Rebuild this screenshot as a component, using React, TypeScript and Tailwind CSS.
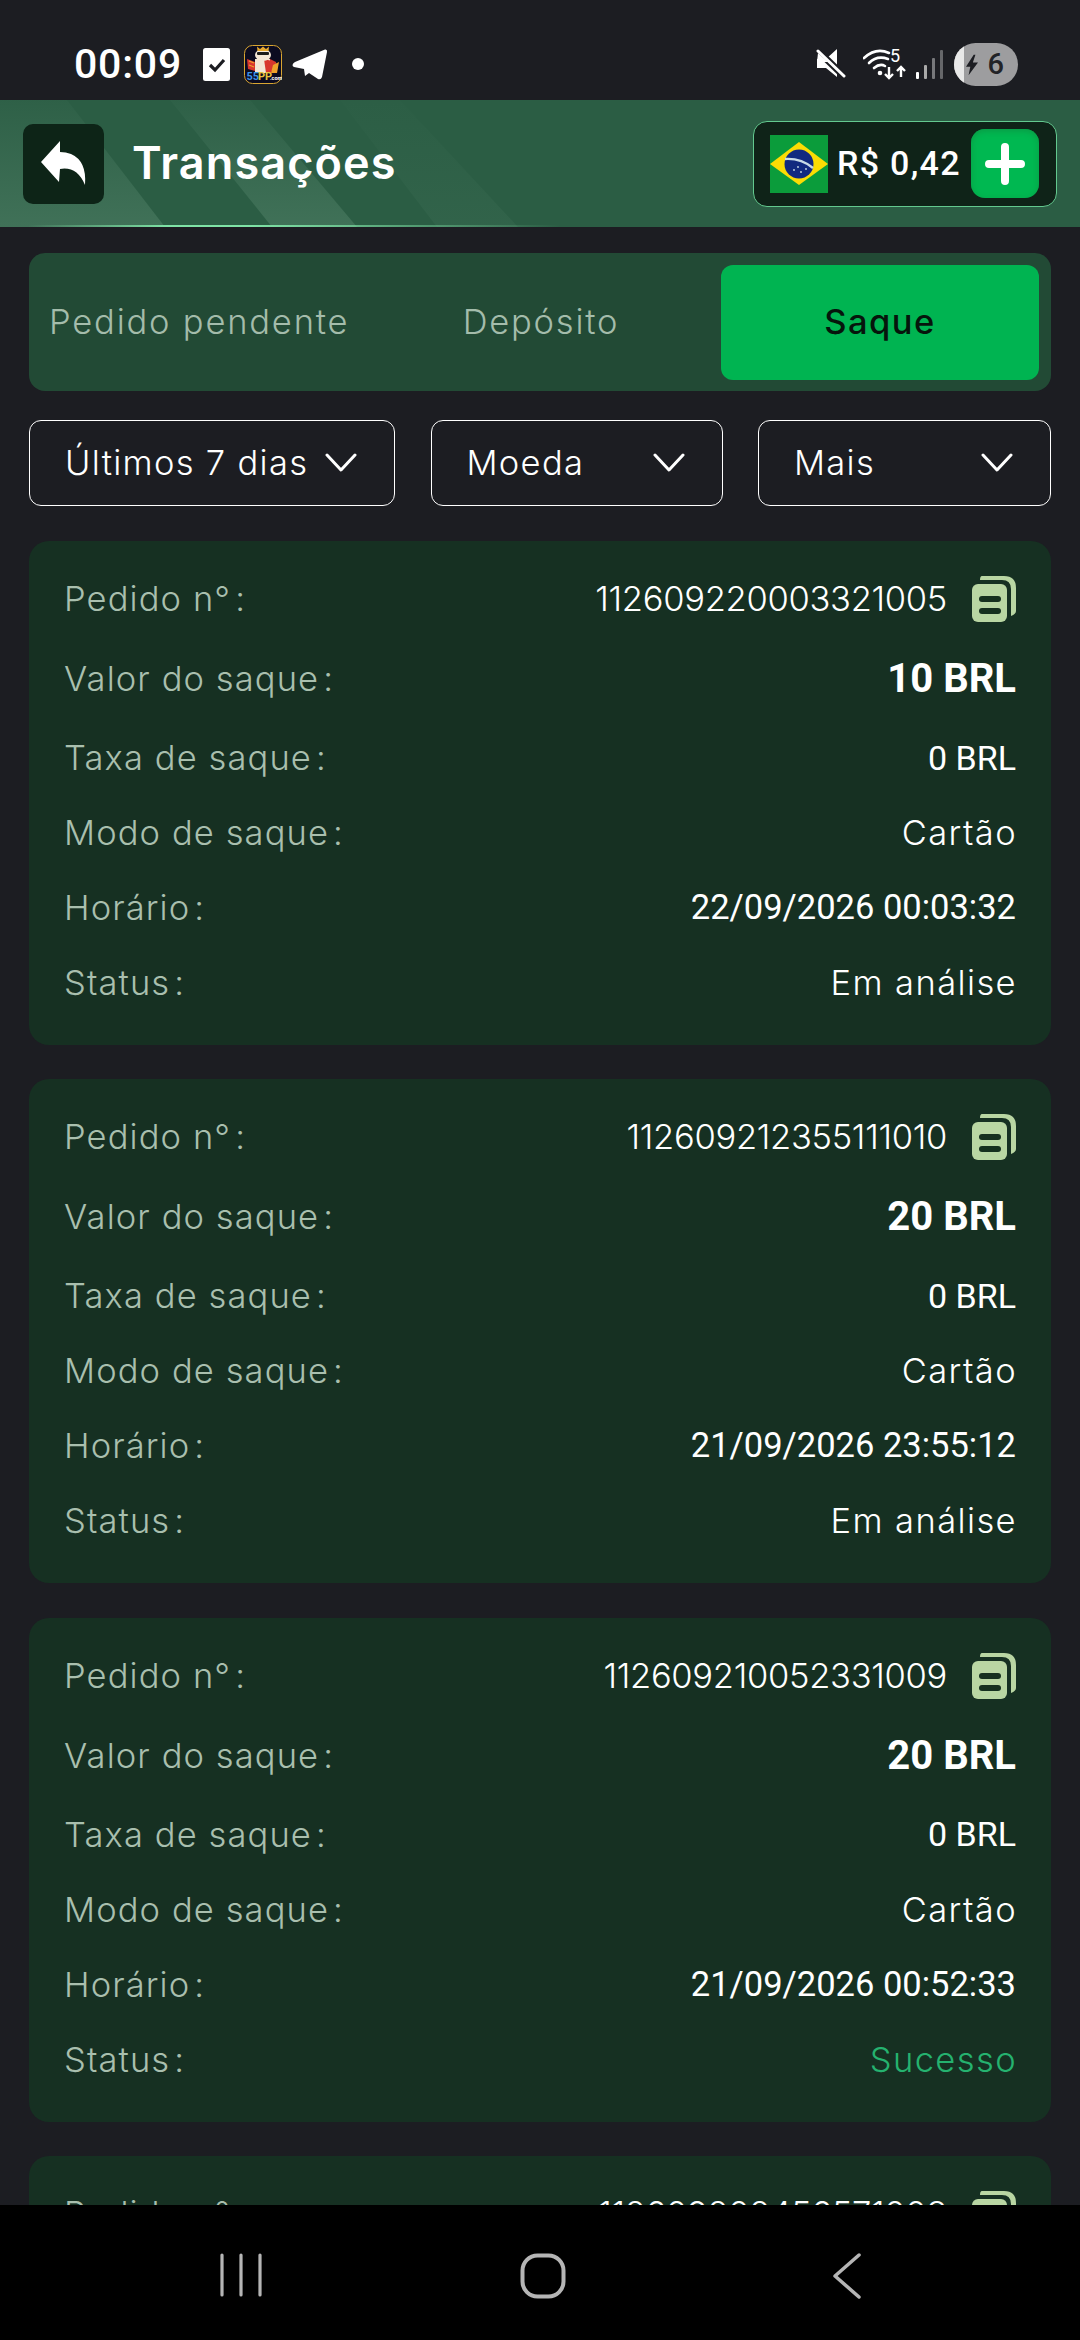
import React from "react";

const SANS = "font-['Inter','Liberation_Sans',sans-serif]";
const ROBOTO = "font-['Roboto','Liberation_Sans',sans-serif]";

type Order = { id: string; value: string; date: string; status: string; ok?: boolean };

const orders: Order[] = [
  { id: "112609220003321005", value: "10 BRL", date: "22/09/2026 00:03:32", status: "Em análise" },
  { id: "112609212355111010", value: "20 BRL", date: "21/09/2026 23:55:12", status: "Em análise" },
  { id: "112609210052331009", value: "20 BRL", date: "21/09/2026 00:52:33", status: "Sucesso", ok: true },
  { id: "112609202456571008", value: "20 BRL", date: "20/09/2026 00:24:56", status: "Sucesso", ok: true },
];

function Chevron() {
  return (
    <svg width="32" height="22" viewBox="0 0 32 22" fill="none" className="shrink-0">
      <path d="M2 3 L16 18 L30 3" stroke="white" strokeWidth="3" strokeLinecap="round" strokeLinejoin="round" />
    </svg>
  );
}

function CopyIcon() {
  return (
    <svg width="44" height="46" viewBox="0 0 44 46" className="shrink-0">
      <path d="M10 0 H32 Q44 0 44 12 V35 Q44 38 39 40 V13 Q39 4 30 4 H8 Q8 0 10 0 Z" fill="#b9d6a3" />
      <rect x="0" y="8" width="35" height="38" rx="6" fill="#b9d6a3" />
      <rect x="7" y="20" width="22" height="6" rx="3" fill="#16301f" />
      <rect x="7" y="32" width="22" height="6" rx="3" fill="#16301f" />
    </svg>
  );
}

function Label({ text }: { text: string }) {
  return (
    <span className={`${SANS} text-[34.5px] font-light tracking-[1.1px] text-[#a9bfae]`}>
      {text}
      <span className="ml-[4px]">:</span>
    </span>
  );
}

function Row({ label, h, children }: { label: string; h: string; children: React.ReactNode }) {
  return (
    <div className={`flex items-center justify-between ${h}`}>
      <Label text={label} />
      {children}
    </div>
  );
}

function Card({ o }: { o: Order }) {
  const text = `${SANS} text-[34.5px] font-light tracking-[1.4px] text-white`;
  return (
    <div className="h-[504px] shrink-0 rounded-[20px] bg-[#163022] px-[35px] pt-[20px]">
      <Row label="Pedido n°" h="h-[76px]">
        <div className="flex items-center gap-[25px]">
          <span className={`${SANS} text-[34.5px] font-light tracking-[-0.3px] text-white`}>{o.id}</span>
          <CopyIcon />
        </div>
      </Row>
      <Row label="Valor do saque" h="h-[84px]">
        <span className={`${ROBOTO} text-[40px] font-bold text-white`}>{o.value}</span>
      </Row>
      <Row label="Taxa de saque" h="h-[74px]">
        <span className={`${ROBOTO} text-[34px] text-white`}>0 BRL</span>
      </Row>
      <Row label="Modo de saque" h="h-[76px]">
        <span className={`${text} -mr-[1px]`}>Cartão</span>
      </Row>
      <Row label="Horário" h="h-[74px]">
        <span className={`${ROBOTO} text-[34.5px] text-white`}>{o.date}</span>
      </Row>
      <Row label="Status" h="h-[76px]">
        <span className={`-mr-[1px] ${o.ok ? `${SANS} text-[34.5px] font-light tracking-[1.4px] text-[#25b26f]` : text}`}>{o.status}</span>
      </Row>
    </div>
  );
}

function Filter({ label, w }: { label: string; w: string }) {
  return (
    <div className={`flex h-[86px] items-center justify-between rounded-[12px] border border-white pl-[35px] pr-[37px] ${w}`}>
      <span className={`${SANS} text-[34.5px] font-light tracking-[1.3px] text-white`}>{label}</span>
      <Chevron />
    </div>
  );
}

function AppIcon() {
  return (
    <svg width="38" height="39" viewBox="0 0 38 39" className="shrink-0">
      <rect x="0.5" y="0.5" width="37" height="38" rx="8" fill="#0b0b20" stroke="#d9a531" />
      <path d="M24 13 L32 17 L33 26 L25 27 Z" fill="#d8362e" />
      <path d="M11 14 H26 V28 H11 Z" fill="#f3e6d6" />
      <path d="M20 14 L28 16 L27 28 H22 Z" fill="#d8362e" />
      <ellipse cx="19" cy="10" rx="8" ry="6" fill="#f3e6d6" />
      <rect x="13" y="7" width="12" height="3" rx="1" fill="#1a1a1a" />
      <path d="M13 1.5 L16 4 L19 1.5 L22 4 L25 1.5 L24.5 6 H13.5 Z" fill="#e8a92e" />
      <path d="M3 14 L11 17 L11 26 L4 24 Z" fill="#d8362e" />
      <path d="M5 16 L10 18 M5 20 L10 22" stroke="#efa12b" strokeWidth="1.2" />
      <path d="M29 20 L35 17 L33 28 L27 28 Z" fill="#efa12b" />
      <text x="2.5" y="35" fontSize="11" fontWeight="700" fill="#3b93e8" className={ROBOTO}>55</text>
      <text x="14" y="35" fontSize="11" fontWeight="700" fill="#e8c23c" className={ROBOTO}>PP</text>
      <text x="26" y="35" fontSize="5.5" fontWeight="700" fill="#ffffff" className={ROBOTO}>.com</text>
    </svg>
  );
}

function StatusBar() {
  return (
    <div className="flex h-[100px] shrink-0 items-center justify-between bg-[#1c1d22] pl-[74px] pr-[62px] pt-[28px]">
      <div className="flex items-center">
        <span className={`${ROBOTO} w-[107px] text-[41px] font-medium leading-none tracking-[0.8px] text-white`}>00:09</span>
        <svg width="27" height="33" viewBox="0 0 27 33" className="ml-[22px]">
          <rect width="27" height="33" rx="2.5" fill="white" />
          <path d="M7 17 L12 22 L21 12" stroke="#1c1d22" strokeWidth="3.2" fill="none" />
        </svg>
        <div className="ml-[14px]"><AppIcon /></div>
        <svg width="36" height="31" viewBox="0 0 36 31" className="ml-[10px]">
          <path d="M0.5 16 Q1 14 3 13 L33 0.5 Q35.5 0 35 3 L30 28 Q29 31 26 30 L17 24 L13 27 L12 20 L2 18 Q0.5 17.5 0.5 16 Z" fill="white" />
        </svg>
        <div className="ml-[24px] h-[12px] w-[12px] rounded-full bg-white" />
      </div>
      <div className="flex items-center">
        <svg width="30" height="30" viewBox="0 0 30 30">
          <path d="M1 10 H10 L21 0 V28 L10 19 H1 Z" fill="white" />
          <path d="M0 0 L30 29" stroke="#1c1d22" strokeWidth="7" />
          <path d="M2 2 L28 27" stroke="white" strokeWidth="3" strokeLinecap="round" />
          <path d="M2 4 L12 13 L1 13 Z" fill="white" />
        </svg>
        <svg width="44" height="32" viewBox="0 0 44 32" fill="none" stroke="white" className="ml-[17px]">
          <path d="M1 10 Q13 -1 26 5" strokeWidth="2.6" strokeLinecap="round" />
          <path d="M6 15 Q14 7 25 11" strokeWidth="2.6" strokeLinecap="round" />
          <path d="M11 20 Q17 15 22 18" strokeWidth="2.6" strokeLinecap="round" />
          <circle cx="17" cy="25" r="2.3" fill="white" stroke="none" />
          <path d="M26 19 V30 M22 26 L26 30 L30 26" strokeWidth="2.4" />
          <path d="M38 29 V19 M34 23 L38 19 L42 23" strokeWidth="2.4" />
          <text x="27" y="14" fill="white" stroke="none" fontSize="18" className={ROBOTO}>5</text>
        </svg>
        <div className="ml-[9px] flex h-[29px] items-end gap-[4.5px]">
          <div className="h-[7px] w-[3.5px] rounded-[1px] bg-white" />
          <div className="h-[14px] w-[3.5px] rounded-[1px] bg-[#a9a9a9]" />
          <div className="h-[21px] w-[3.5px] rounded-[1px] bg-[#77787b]" />
          <div className="h-[29px] w-[3.5px] rounded-[1px] bg-[#66676a]" />
        </div>
        <div className="relative ml-[11px] flex h-[43px] w-[64px] items-center justify-end overflow-hidden rounded-full bg-[#9d9d9f] pr-[14px]">
          <div className="absolute left-0 top-0 h-full w-[10px] bg-[#e8e8e8]" />
          <svg width="12" height="22" viewBox="0 0 14 24" fill="#1c1d22" className="absolute left-[12px] top-[11px]">
            <path d="M9 0 L0 14 H5 L3 24 L14 9 H8 L11 0 Z" />
          </svg>
          <span className={`${ROBOTO} text-[29px] font-medium leading-none text-[#222327]`}>6</span>
        </div>
      </div>
    </div>
  );
}

function Flag() {
  return (
    <svg width="58" height="58" viewBox="0 0 58 58" className="shrink-0">
      <rect width="58" height="58" fill="#0b9c3b" />
      <path d="M29 7 L58 29 L29 50 L0 29 Z" fill="#fbdc04" />
      <circle cx="29" cy="29" r="14.5" fill="#112a80" />
      <path d="M15 24 Q31 23 43 33" stroke="#c8dbe6" strokeWidth="2.4" fill="none" />
      <circle cx="24" cy="35" r="0.9" fill="#c8dbe6" />
      <circle cx="31" cy="37" r="0.9" fill="#c8dbe6" />
      <circle cx="36" cy="34" r="0.9" fill="#c8dbe6" />
      <circle cx="28" cy="32" r="0.9" fill="#c8dbe6" />
    </svg>
  );
}

function Header() {
  return (
    <div className="relative flex h-[127px] shrink-0 items-center justify-between overflow-hidden bg-[#2b5d44] pl-[23px] pr-[23px]">
      <svg className="absolute left-0 top-0" width="620" height="127" viewBox="0 0 620 127">
        <defs>
          <linearGradient id="band" x1="0" y1="0" x2="0" y2="1">
            <stop offset="0" stopColor="#6d9c82" stopOpacity="0.05" />
            <stop offset="1" stopColor="#6d9c82" stopOpacity="0.32" />
          </linearGradient>
        </defs>
        <polygon points="0,0 67,0 165,127 0,127" fill="url(#band)" />
        <polygon points="170,0 250,0 357,127 272,127" fill="url(#band)" />
        <polygon points="340,0 400,0 518,127 437,127" fill="url(#band)" opacity="0.3" />
      </svg>
      <div className="absolute bottom-0 left-0 h-[2px] w-[560px] bg-[linear-gradient(90deg,transparent_5%,#7fe3a6_30%,#7fe3a6_45%,transparent)]" />
      <div className="relative flex items-center">
        <div className="flex h-[80px] w-[81px] items-center justify-center rounded-[10px] bg-[#0d2417]">
          <svg width="46" height="46" viewBox="0 0 46 46" fill="white">
            <path d="M19 0 L0 21 L18 41 L19 28 Q36 25 44 44 Q46 20 30 13 Q25 11 19 11 Z" />
          </svg>
        </div>
        <span className={`${SANS} ml-[28px] -mt-[2px] text-[45px] font-semibold leading-none tracking-[1.1px] text-white`}>Transações</span>
      </div>
      <div className="relative flex h-[86px] w-[304px] items-center rounded-[14px] border border-[#63c98f] bg-[#0f2318] pl-[16px]">
        <Flag />
        <span className={`${ROBOTO} ml-[9px] w-[134px] text-[34px] font-medium tracking-[1.3px] text-white`}>R$ 0,42</span>
        <div className="flex h-[69px] w-[68px] items-center justify-center rounded-[14px] bg-[#00b851] shadow-[inset_0_2px_6px_#0a9a45]">
          <svg width="40" height="42" viewBox="0 0 40 42">
            <path d="M20 4 V38 M4 21 H36" stroke="white" strokeWidth="8" strokeLinecap="round" />
          </svg>
        </div>
      </div>
    </div>
  );
}

function Tabs() {
  const idle = `${SANS} text-[34.5px] font-light tracking-[1.8px] text-[#a4bcab]`;
  return (
    <div className="flex h-[138px] shrink-0 items-center rounded-[16px] bg-[#224a35] pl-[20px] pr-[12px]">
      <span className={`${idle} w-[342px]`}>Pedido pendente</span>
      <span className={`${idle} w-[300px] text-center`}>Depósito</span>
      <div className={`${SANS} ml-auto flex h-[115px] w-[318px] items-center justify-center rounded-[12px] bg-[#00b451] text-[34.5px] font-medium tracking-[1.5px] text-[#06150c]`}>
        Saque
      </div>
    </div>
  );
}

function NavBar() {
  return (
    <div className="flex h-[135px] shrink-0 items-start bg-black pl-[220px] pt-[48px]">
      <svg width="42" height="44" viewBox="0 0 42 44">
        <path d="M2 2 V42 M21 2 V42 M40 2 V42" stroke="#b5b5b5" strokeWidth="3.2" strokeLinecap="round" />
      </svg>
      <svg width="46" height="46" viewBox="0 0 46 46" fill="none" className="ml-[258px]">
        <rect x="2.5" y="2.5" width="41" height="41" rx="15" stroke="#b5b5b5" strokeWidth="4" />
      </svg>
      <svg width="30" height="46" viewBox="0 0 30 46" fill="none" className="ml-[266px]">
        <path d="M27 2 L3 23 L27 44" stroke="#b5b5b5" strokeWidth="3.5" strokeLinecap="round" strokeLinejoin="round" />
      </svg>
    </div>
  );
}

export default function App() {
  return (
    <div className="flex h-[2340px] w-[1080px] flex-col overflow-hidden bg-[#1c1d22]">
      <StatusBar />
      <Header />
      <div className="flex min-h-0 flex-1 flex-col overflow-hidden px-[29px] pt-[26px]">
        <Tabs />
        <div className="mt-[29px] flex shrink-0 justify-between">
          <Filter label="Últimos 7 dias" w="w-[366px]" />
          <Filter label="Moeda" w="w-[292px]" />
          <Filter label="Mais" w="w-[293px]" />
        </div>
        <div className="mt-[35px] flex flex-col gap-[34.3px]">
          {orders.map((o) => (
            <Card key={o.id} o={o} />
          ))}
        </div>
      </div>
      <NavBar />
    </div>
  );
}
